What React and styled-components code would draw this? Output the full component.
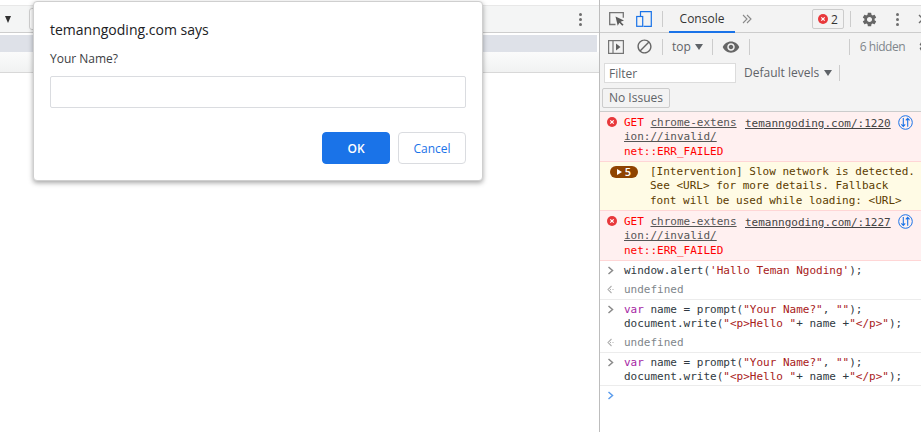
import React from "react";
import styled, { createGlobalStyle } from "styled-components";
import { MdSettings, MdVisibility, MdBlock } from "react-icons/md";

const Global = createGlobalStyle`
  html, body { margin: 0; padding: 0; background: #fff; }
  body { width: 921px; height: 432px; overflow: hidden; font-family: "Open Sans", "Noto Sans", sans-serif; }
`;

const Inspect = () => (
  <svg width="16" height="14" viewBox="0 0 16 14" fill="none" style={{ flex: "none" }}>
    <path d="M6.5 12.5H.7V.7h13.6v5" stroke="#757575" strokeWidth="1.3" />
    <path d="M6.5 4.5l8.5 4-3.4 1.2 3 3-1.3 1.1-2.9-3-1.7 2.9z" fill="#5a5a5a" />
  </svg>
);

const Device = () => (
  <svg width="16" height="16" viewBox="0 0 16 16" fill="none" stroke="#1a73e8" strokeWidth="1.2" style={{ flex: "none" }}>
    <path d="M4.5 5V.7h10.8v14.6H7.5" />
    <rect x="0.7" y="5.5" width="6" height="9.8" />
  </svg>
);

const DrawerPlay = () => (
  <svg width="16" height="14" viewBox="0 0 16 14" fill="none" style={{ flex: "none" }}>
    <rect x="0.6" y="0.6" width="14.8" height="12.8" stroke="#757575" strokeWidth="1.2" />
    <path d="M5 1v12" stroke="#757575" strokeWidth="1.2" />
    <path d="M8 3.6l4.5 3.4L8 10.4z" fill="#5f5f5f" />
  </svg>
);

const ErrorDot = ({ size = 10 }) => (
  <svg width={size} height={size} viewBox="0 0 10 10" style={{ flex: "none" }}>
    <circle cx="5" cy="5" r="5" fill="#e8383b" />
    <path d="M3.3 3.3l3.4 3.4M6.7 3.3L3.3 6.7" stroke="#fff" strokeWidth="1.2" />
  </svg>
);

const NetworkIcon = () => (
  <svg width="15" height="15" viewBox="0 0 15 15" fill="none" stroke="#1a73e8" strokeWidth="1">
    <circle cx="7.5" cy="7.5" r="6.8" />
    <path d="M5.3 3v8.5M3.4 9.4l1.9 2.1 1.9-2.1M9.7 11.8V3.3M7.8 5.4l1.9-2.1 1.9 2.1" strokeWidth="1.1" />
  </svg>
);

const Chevron = ({ color = "#8a8a8a" }) => (
  <svg width="8" height="9" viewBox="0 0 8 9" fill="none" stroke={color} strokeWidth="1.5">
    <path d="M1.5 1l4 3.5-4 3.5" />
  </svg>
);

const BackArrow = () => (
  <svg width="9" height="9" viewBox="0 0 9 9" fill="none" stroke="#b0b0b0" strokeWidth="1.1">
    <path d="M4.5 1L1 4.5 4.5 8M3 4.5h1M5.5 4.5h1" />
  </svg>
);

const Double = () => (
  <svg width="10" height="10" viewBox="0 0 10 10" fill="none" stroke="#8a8a8a" strokeWidth="1.1" style={{ flex: "none" }}>
    <path d="M1 1l4 4-4 4M5 1l4 4-4 4" />
  </svg>
);

const CloseMark = () => (
  <svg width="10" height="10" viewBox="0 0 10 10" fill="none" stroke="#6e6e6e" strokeWidth="1.4" style={{ flex: "none" }}>
    <path d="M1 1l8 8M9 1l-8 8" />
  </svg>
);

const Page = styled.div`
  position: relative;
  display: flex;
  width: 921px;
  height: 432px;
  overflow: hidden;
`;

const Viewport = styled.div`
  width: 599px;
  flex: none;
  padding-top: 5px;
  box-sizing: border-box;
`;

const PageBar = styled.div`
  height: 28px;
  box-sizing: border-box;
  border-top: 1px solid #e8e8e8;
  border-bottom: 1px solid #cdcdcd;
  background: #f4f5f5;
  display: flex;
  align-items: center;
  padding: 0 17px 0 5px;
`;

const PageCaret = styled.span`
  width: 0;
  height: 0;
  border-left: 3.5px solid transparent;
  border-right: 3.5px solid transparent;
  border-top: 7px solid #303030;
`;

const PageSearch = styled.span`
  width: 100px;
  height: 22px;
  margin-left: 18px;
  box-sizing: border-box;
  border: 1px solid #d0d0d0;
  border-radius: 3px;
  background: #fff;
`;

const Dots = styled.span`
  display: flex;
  flex: none;
  flex-direction: column;
  gap: 2px;
  margin-left: ${(p) => p.$left || "0"};
  i {
    width: 3px;
    height: 3px;
    border-radius: 50%;
    background: #6e6e6e;
  }
`;

const PageStripe = styled.div`
  margin: 2px 2px 0 0;
  height: 17px;
  background: #dee1e8;
`;

const PageGutter = styled.div`
  height: 21px;
  box-sizing: border-box;
  background: linear-gradient(#fbfbfb, #f1f2f2);
  border-bottom: 1px solid #d8d8d8;
`;

const Dialog = styled.div`
  position: absolute;
  left: 33px;
  top: 1px;
  width: 450px;
  height: 180px;
  box-sizing: border-box;
  padding: 19px 16px 16px;
  background: #fff;
  border-radius: 4px;
  border: 1px solid #cfcfcf;
  box-shadow: 0 2px 5px rgba(0, 0, 0, 0.35);
  display: flex;
  flex-direction: column;
`;

const DialogTitle = styled.div`
  font-size: 14px;
  line-height: 18px;
  color: #202124;
`;

const DialogLabel = styled.div`
  margin-top: 12px;
  font-size: 12px;
  line-height: 16px;
  color: #3c4043;
`;

const DialogInput = styled.div`
  margin-top: 9px;
  height: 32px;
  box-sizing: border-box;
  border: 1px solid #dadce0;
  border-radius: 2px;
`;

const DialogActions = styled.div`
  margin-top: 24px;
  display: flex;
  justify-content: flex-end;
  gap: 8px;
`;

const DialogButton = styled.button`
  width: 68px;
  height: 32px;
  padding: 0;
  border-radius: 4px;
  font-family: inherit;
  font-size: 12px;
  font-weight: ${(p) => (p.$primary ? 600 : 400)};
  color: ${(p) => (p.$primary ? "#fff" : "#1a73e8")};
  background: ${(p) => (p.$primary ? "#1a73e8" : "#fff")};
  border: 1px solid ${(p) => (p.$primary ? "#1a73e8" : "#dadce0")};
`;

const Devtools = styled.div`
  width: 322px;
  flex: none;
  box-sizing: border-box;
  padding-top: 5px;
  border-left: 1px solid #bdbdbd;
  display: flex;
  flex-direction: column;
  overflow: hidden;
`;

const TopBar = styled.div`
  height: 28px;
  box-sizing: border-box;
  border-top: 1px solid #dcdcdc;
  border-bottom: 1px solid #ccc;
  background: #f3f3f3;
  display: flex;
  align-items: center;
  padding-left: 9px;
  color: #333;
`;

const Sep = styled.span`
  width: 1px;
  height: 16px;
  flex: none;
  background: #ccc;
  margin: ${(p) => p.$margin || "0 6px"};
`;

const Push = styled.span`
  display: flex;
  flex: none;
  margin-left: ${(p) => p.$left}px;
`;

const Tab = styled.div`
  align-self: stretch;
  width: 66px;
  flex: none;
  margin-bottom: -1px;
  box-sizing: border-box;
  border-bottom: 2px solid #1a73e8;
  display: flex;
  align-items: center;
  justify-content: center;
  font-size: 12px;
`;

const Badge = styled.div`
  width: 32px;
  height: 20px;
  flex: none;
  box-sizing: border-box;
  margin-left: 60px;
  border: 1px solid #ccc;
  border-radius: 2px;
  display: flex;
  align-items: center;
  justify-content: center;
  gap: 3px;
  font-size: 12px;
`;

const ToolRow = styled.div`
  height: 27px;
  flex: none;
  background: #f3f3f3;
  display: flex;
  align-items: center;
  padding-left: 8px;
  font-size: 12px;
  color: #5f6368;
`;

const HiddenCount = styled.span`
  flex: none;
  width: 45px;
  white-space: nowrap;
  letter-spacing: -0.5px;
  color: #80868b;
`;

const FilterRow = styled.div`
  height: 25px;
  flex: none;
  background: #f3f3f3;
  display: flex;
  align-items: center;
  padding-left: 4px;
  font-size: 12px;
  color: #5f6368;
`;

const FilterInput = styled.div`
  width: 132px;
  height: 20px;
  box-sizing: border-box;
  background: #fff;
  border: 1px solid #dcdcdc;
  padding-left: 4px;
  line-height: 19px;
`;

const Caret = styled.span`
  width: 0;
  height: 0;
  margin-left: ${(p) => p.$left || 5}px;
  border-left: 4px solid transparent;
  border-right: 4px solid transparent;
  border-top: 6px solid #5f6368;
`;

const IssuesRow = styled.div`
  height: 27px;
  flex: none;
  box-sizing: border-box;
  background: #f3f3f3;
  border-bottom: 1px solid #ccc;
  padding: 3px 0 0 2px;
`;

const IssuesButton = styled.div`
  width: 68px;
  height: 20px;
  box-sizing: border-box;
  border: 1px solid #ccc;
  border-radius: 2px;
  font-size: 12px;
  line-height: 18px;
  text-align: center;
  color: #5f6368;
`;

const Log = styled.div`
  font-family: "DejaVu Sans Mono", "Liberation Mono", monospace;
  font-size: 11px;
  line-height: 14.4px;
  color: #303942;
`;

const ErrorRow = styled.div`
  position: relative;
  height: 50px;
  box-sizing: border-box;
  padding: 4px 0 0 24px;
  background: #fff0f0;
  border-bottom: 1px solid #ffd6d6;
  display: flex;
  color: #f00;
`;

const RowIcon = styled.span`
  position: absolute;
  left: 7px;
  top: 5px;
  display: flex;
`;

const ErrorText = styled.div`
  width: 121px;
  white-space: pre;
`;

const Muted = styled.span`
  color: #555;
  text-decoration: underline;
`;

const Source = styled.div`
  color: #444;
  text-decoration: underline;
  white-space: pre;
  margin-top: 1px;
`;

const SourceIcon = styled.span`
  display: flex;
  margin-left: 7px;
  margin-top: -1px;
`;

const WarnRow = styled.div`
  position: relative;
  height: 49px;
  box-sizing: border-box;
  padding: 3px 0 0 50px;
  background: #fffbe5;
  border-bottom: 1px solid #ffd6d6;
  color: #5c3c00;
  white-space: pre;
`;

const Count = styled.span`
  position: absolute;
  left: 10px;
  top: 4px;
  width: 28px;
  height: 12px;
  border-radius: 6px;
  background: #8f4400;
  color: #fff;
  font-family: "Open Sans", sans-serif;
  font-size: 11px;
  font-weight: 600;
  display: flex;
  align-items: center;
  justify-content: center;
  gap: 3px;
  i {
    width: 0;
    height: 0;
    border-left: 5px solid #fff;
    border-top: 3.5px solid transparent;
    border-bottom: 3.5px solid transparent;
  }
`;

const ConsoleRow = styled.div`
  display: flex;
  padding-left: 7px;
  padding-top: ${(p) => p.$top ?? 3}px;
  padding-bottom: ${(p) => p.$bottom ?? 3}px;
  border-bottom: ${(p) => (p.$line ? "1px solid #ececec" : "none")};
  white-space: pre;
`;

const Gutter = styled.span`
  width: 17px;
  flex: none;
  padding-top: 2px;
  display: flex;
  align-items: flex-start;
`;

const Grey = styled.span`
  color: #80868b;
`;

const Kw = styled.span`
  color: #a626a4;
`;

const Str = styled.span`
  color: #a8201a;
`;

const promptCode = (
  <>
    <Kw>var</Kw> name = prompt(<Str>"Your Name?"</Str>, <Str>""</Str>);{"\n"}
    document.write(<Str>"&lt;p&gt;Hello "</Str>+ name +<Str>"&lt;/p&gt;"</Str>);
  </>
);

const App = () => (
  <Page>
    <Global />
    <Viewport>
      <PageBar>
        <PageCaret />
        <PageSearch />
        <Dots $left="auto">
          <i />
          <i />
          <i />
        </Dots>
      </PageBar>
      <PageStripe />
      <PageGutter />
    </Viewport>

    <Devtools>
      <TopBar>
        <Inspect />
        <Push $left={11}>
          <Device />
        </Push>
        <Sep $margin="0 6px 0 10px" />
        <Tab>Console</Tab>
        <Push $left={7}>
          <Double />
        </Push>
        <Badge>
          <ErrorDot />2
        </Badge>
        <Sep $margin="0 0 0 6px" />
        <Push $left={10}>
          <MdSettings size={17} color="#666" />
        </Push>
        <Dots $left="18px">
          <i />
          <i />
          <i />
        </Dots>
        <Push $left={19}>
          <CloseMark />
        </Push>
      </TopBar>
      <ToolRow>
        <DrawerPlay />
        <Push $left={12}>
          <MdBlock size={17} color="#666" />
        </Push>
        <Sep $margin="0 9px" />
        top
        <Caret $left={4} />
        <Sep $margin="0 9px" />
        <MdVisibility size={18} color="#666" style={{ flex: "none" }} />
        <Sep $margin="0 0 0 9px" />
        <Sep $margin="0 10px 0 99px" />
        <HiddenCount>6 hidden</HiddenCount>
        <Push $left={13}>
          <MdSettings size={15} color="#666" />
        </Push>
      </ToolRow>
      <FilterRow>
        <FilterInput>Filter</FilterInput>
        <Push $left={8}>Default levels</Push>
        <Caret $left={5} />
        <Sep $margin="0 0 0 7px" />
      </FilterRow>
      <IssuesRow>
        <IssuesButton>No Issues</IssuesButton>
      </IssuesRow>
      <Log>
        <ErrorRow>
          <RowIcon>
            <ErrorDot />
          </RowIcon>
          <ErrorText>
            GET <Muted>chrome-extens</Muted>
            {"\n"}
            <Muted>ion://invalid/</Muted>
            {"\n"}net::ERR_FAILED
          </ErrorText>
          <Source>temanngoding.com/:1220</Source>
          <SourceIcon>
            <NetworkIcon />
          </SourceIcon>
        </ErrorRow>
        <WarnRow>
          <Count>
            <i />5
          </Count>
          {"[Intervention] Slow network is detected.\nSee <URL> for more details. Fallback\nfont will be used while loading: <URL>"}
        </WarnRow>
        <ErrorRow>
          <RowIcon>
            <ErrorDot />
          </RowIcon>
          <ErrorText>
            GET <Muted>chrome-extens</Muted>
            {"\n"}
            <Muted>ion://invalid/</Muted>
            {"\n"}net::ERR_FAILED
          </ErrorText>
          <Source>temanngoding.com/:1227</Source>
          <SourceIcon>
            <NetworkIcon />
          </SourceIcon>
        </ErrorRow>
        <ConsoleRow $top={3} $bottom={3}>
          <Gutter>
            <Chevron />
          </Gutter>
          <span>
            window.alert(<Str>'Hallo Teman Ngoding'</Str>);
          </span>
        </ConsoleRow>
        <ConsoleRow $line $top={2} $bottom={1}>
          <Gutter>
            <BackArrow />
          </Gutter>
          <Grey>undefined</Grey>
        </ConsoleRow>
        <ConsoleRow $top={3} $bottom={2}>
          <Gutter>
            <Chevron />
          </Gutter>
          <span>{promptCode}</span>
        </ConsoleRow>
        <ConsoleRow $line $top={2} $bottom={2}>
          <Gutter>
            <BackArrow />
          </Gutter>
          <Grey>undefined</Grey>
        </ConsoleRow>
        <ConsoleRow $line $top={3} $bottom={0}>
          <Gutter>
            <Chevron />
          </Gutter>
          <span>{promptCode}</span>
        </ConsoleRow>
        <ConsoleRow $top={3}>
          <Gutter>
            <Chevron color="#5b9cec" />
          </Gutter>
        </ConsoleRow>
      </Log>
    </Devtools>

    <Dialog>
      <DialogTitle>temanngoding.com says</DialogTitle>
      <DialogLabel>Your Name?</DialogLabel>
      <DialogInput />
      <DialogActions>
        <DialogButton $primary>OK</DialogButton>
        <DialogButton>Cancel</DialogButton>
      </DialogActions>
    </Dialog>
  </Page>
);

export default App;
